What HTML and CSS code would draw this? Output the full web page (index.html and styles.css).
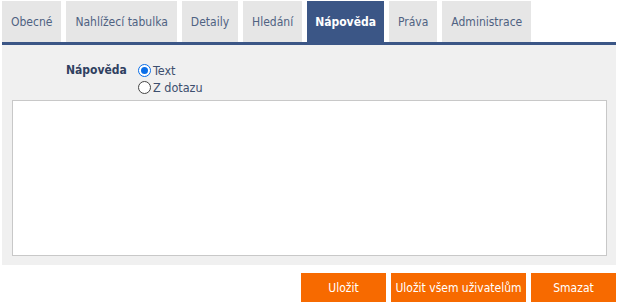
FILE: index.html
```html
<!DOCTYPE html>
<html lang="cs">
<head>
<meta charset="utf-8">
<title>Nápověda</title>
<link rel="stylesheet" href="styles.css">
</head>
<body>
<div class="page">
  <nav class="tabs">
    <a class="tab">Obecné</a>
    <a class="tab">Nahlížecí tabulka</a>
    <a class="tab">Detaily</a>
    <a class="tab">Hledání</a>
    <a class="tab active">Nápověda</a>
    <a class="tab">Práva</a>
    <a class="tab">Administrace</a>
  </nav>
  <section class="panel">
    <div class="field">
      <div class="label">Nápověda</div>
      <div class="options">
        <label class="option"><span class="radio checked"></span>Text</label>
        <label class="option"><span class="radio"></span>Z dotazu</label>
      </div>
    </div>
    <div class="editor"></div>
  </section>
  <div class="actions">
    <button class="btn btn-save">Uložit</button>
    <button class="btn btn-all">Uložit všem uživatelům</button>
    <button class="btn btn-delete">Smazat</button>
  </div>
</div>
</body>
</html>
```
FILE: styles.css
```css
html, body {
  margin: 0;
  padding: 0;
  background: #ffffff;
}
body {
  font-family: "DejaVu Sans Condensed", "DejaVu Sans", sans-serif;
  font-size: 12px;
  color: #4a5a78;
}
.page {
  width: 614px;
  margin-left: 2px;
}
.tabs {
  display: flex;
  gap: 5px;
  padding-top: 1px;
  height: 41px;
}
.tab {
  display: flex;
  align-items: center;
  padding: 1px 9px 0;
  background: #e6e6e6;
  color: #4f6282;
  height: 41px;
  box-sizing: border-box;
}
.tab.active {
  background: #3b5686;
  color: #ffffff;
  font-weight: bold;
  padding: 1px 8px 0;
}
.panel {
  border-top: 3px solid #3b5686;
  background: #f0f0f0;
  padding: 17px 9px 0 10px;
  box-sizing: border-box;
  height: 223px;
}
.field {
  display: flex;
  align-items: flex-start;
  padding-left: 54px;
}
.label {
  width: 72px;
  font-weight: bold;
  color: #2f4060;
  line-height: 17px;
}
.options {
  display: flex;
  flex-direction: column;
}
.option {
  display: flex;
  align-items: center;
  height: 17px;
  color: #3d4f6e;
  font-size: 12.5px;
}
.radio {
  width: 13px;
  height: 13px;
  border: 1px solid #444444;
  border-radius: 50%;
  background: #fff;
  margin-right: 2px;
  box-sizing: border-box;
  position: relative;
}
.radio.checked {
  border-color: #0a6ee8;
}
.radio.checked::after {
  content: "";
  position: absolute;
  left: 2px;
  top: 2px;
  width: 7px;
  height: 7px;
  border-radius: 50%;
  background: #0a6ee8;
}
.editor {
  margin-top: 4px;
  height: 156px;
  background: #ffffff;
  border: 1px solid #c8c8c8;
  box-sizing: border-box;
}
.actions {
  display: flex;
  justify-content: flex-end;
  gap: 5px;
  margin-top: 8px;
}
.btn {
  border: none;
  background: #f76a00;
  color: #ffffff;
  font-family: inherit;
  font-size: 12px;
  height: 29px;
  padding: 0;
  cursor: pointer;
}
.btn-save { width: 85px; }
.btn-all { width: 135px; }
.btn-delete { width: 85px; }
```
